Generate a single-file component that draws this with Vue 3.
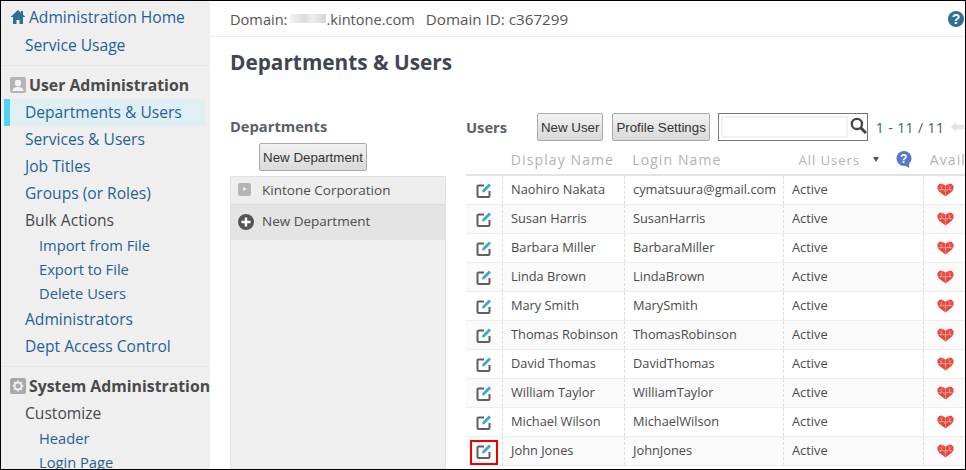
<script setup>
const menuTop = [
  { label: 'Departments & Users', active: true },
  { label: 'Services & Users' },
  { label: 'Job Titles' },
  { label: 'Groups (or Roles)' },
  { label: 'Bulk Actions', plain: true },
];
const bulk = ['Import from File', 'Export to File', 'Delete Users'];
const users = [
  ['Naohiro Nakata', 'cymatsuura@gmail.com'],
  ['Susan Harris', 'SusanHarris'],
  ['Barbara Miller', 'BarbaraMiller'],
  ['Linda Brown', 'LindaBrown'],
  ['Mary Smith', 'MarySmith'],
  ['Thomas Robinson', 'ThomasRobinson'],
  ['David Thomas', 'DavidThomas'],
  ['William Taylor', 'WilliamTaylor'],
  ['Michael Wilson', 'MichaelWilson'],
  ['John Jones', 'JohnJones'],
];
</script>

<template>
  <div class="page">
    <aside class="side">
      <div class="group">
        <a class="item top">
          <svg class="ico home" viewBox="0 0 16 16"><path d="M8 1 0.5 8H3v7h3.500v-4h3v4H13V8h2.500L13 5.700V2h-2v1.800z" fill="#2f6f8f" /></svg>
          Administration Home
        </a>
        <a class="item usage">Service Usage</a>
      </div>
      <div class="group">
        <div class="head">
          <svg class="ico" viewBox="0 0 16 16"><rect width="16" height="16" rx="2" fill="#b4b4b4" /><circle cx="8" cy="6" r="3.200" fill="#f4f4f4" /><path d="M2.500 14c0-3 2.500-4 5.500-4s5.500 1 5.500 4z" fill="#f4f4f4" /></svg>
          User Administration
        </div>
        <a v-for="m in menuTop" :key="m.label" class="item" :class="{ active: m.active, plain: m.plain }">{{ m.label }}</a>
        <a v-for="b in bulk" :key="b" class="item sub">{{ b }}</a>
        <a class="item">Administrators</a>
        <a class="item">Dept Access Control</a>
      </div>
      <div class="group">
        <div class="head">
          <svg class="ico" viewBox="0 0 16 16"><rect width="16" height="16" rx="2" fill="#a8a8a8" /><circle cx="8" cy="8" r="3.500" fill="none" stroke="#f0f0f0" stroke-width="2" /><path d="M8 2.500v2M8 11.500v2M2.500 8h2M11.500 8h2M4.100 4.100l1.400 1.400M10.500 10.500l1.400 1.400M4.100 11.900l1.400-1.400M10.500 5.500l1.400-1.400" stroke="#f0f0f0" stroke-width="1.600" /></svg>
          System Administration
        </div>
        <a class="item plain">Customize</a>
        <a class="item sub">Header</a>
        <a class="item sub">Login Page</a>
      </div>
    </aside>

    <main class="main">
      <header class="bar">
        <span>Domain:</span><span class="blur"></span><span>.kintone.com</span>
        <span class="domain-id">Domain ID: c367299</span>
        <span class="help">?</span>
      </header>
      <h1>Departments &amp; Users</h1>
      <div class="cols">
        <section class="depts">
          <h2>Departments</h2>
          <button class="btn new-dept">New Department</button>
          <div class="tree">
            <div class="tree-row first">
              <span class="play"></span>
              Kintone Corporation
            </div>
            <div class="tree-row add">
              <svg class="plus" viewBox="0 0 16 16"><circle cx="8" cy="8" r="8" fill="#555" /><path d="M8 3.500v9M3.500 8h9" stroke="#fff" stroke-width="2.400" /></svg>
              New Department
            </div>
          </div>
        </section>

        <section class="users">
          <div class="toolbar">
            <h2>Users</h2>
            <button class="btn">New User</button>
            <button class="btn">Profile Settings</button>
            <div class="search">
              <input type="text" />
              <svg class="lens" viewBox="0 0 16 16"><circle cx="6.500" cy="6.500" r="4.800" fill="none" stroke="#444" stroke-width="2.200" /><path d="M10 10l5 5" stroke="#444" stroke-width="2.800" /></svg>
            </div>
            <span class="count">1 - 11 / 11</span>
            <svg class="arrow" viewBox="0 0 14 12"><path d="M0 6 6 0v3.500h8v5H6V12z" fill="#e4e4e4" /></svg>
          </div>
          <div class="table">
            <div class="row th">
              <div class="c-edit"></div>
              <div class="c-name">Display Name</div>
              <div class="c-login">Login Name</div>
              <div class="c-status">
                All Users<span class="caret"></span>
                <svg class="bubble" viewBox="0 0 16 17"><circle cx="8" cy="7.500" r="7.500" fill="#5577cc" /><path d="M8 14l5 3v-6z" fill="#5577cc" /><text x="8" y="12" text-anchor="middle" font-size="12" font-weight="700" font-family="Liberation Sans" fill="#fff">?</text></svg>
              </div>
              <div class="c-app">Avail</div>
            </div>
            <div v-for="(u, i) in users" :key="u[1]" class="row">
              <div class="c-edit">
                <span class="edit-wrap" :class="{ marked: i === 9 }">
                  <svg viewBox="0 0 16 16" class="edit">
                    <path d="M8 3.500H2.500a1 1 0 0 0-1 1v9.500a1 1 0 0 0 1 1h10a1 1 0 0 0 1-1V9" fill="none" stroke="#5f5f5f" stroke-width="2" />
                    <path d="M6 10.500 6.500 8 13 1.500 15 3.500 8.500 10z" fill="#3aa9cf" />
                  </svg>
                </span>
              </div>
              <div class="c-name">{{ u[0] }}</div>
              <div class="c-login">{{ u[1] }}</div>
              <div class="c-status">Active</div>
              <div class="c-app">
                <svg viewBox="0 0 16 14" class="heart">
                  <path d="M8 13.500 1.500 8.500 0 6V3L2 .8H5L8 2.800 11 .8H14L16 3V6L14.500 8.500z" fill="#e8453c" />
                  <path d="M2 3l6 6 6-6M8 3v10M1 6.500h14M5 1 3 8M11 1 13 8" stroke="#f8c4bc" stroke-width=".5" fill="none" />
                </svg>
              </div>
            </div>
          </div>
        </section>
      </div>
    </main>
  </div>
</template>

<style>
html, body {
  margin: 0;
  height: 100%;
  overflow: hidden;
  background: #fff;
}
</style>

<style scoped>
.page {
  box-sizing: border-box;
  width: 966px;
  height: 470px;
  display: flex;
  border: 1px solid #000;
  overflow: hidden;
  font-family: "Open Sans", "Liberation Sans", sans-serif;
  font-size: 14px;
  color: #444;
}

.side {
  width: 209px;
  flex: none;
  background: #efefef;
  padding-top: 3px;
}

.group {
  border-bottom: 1px solid #e6e6e6;
  padding-bottom: 6px;
  margin-bottom: 6px;
}

.group:first-child {
  padding-bottom: 7px;
}

.item {
  display: block;
  height: 27px;
  line-height: 26px;
  padding-left: 24px;
  font-size: 15.600px;
  color: #1f6296;
  white-space: nowrap;
}

.item.top {
  padding-left: 9px;
  padding-bottom: 2px;
  box-sizing: border-box;
  display: flex;
  align-items: center;
  gap: 3px;
}

.item.usage {
  line-height: 28px;
}

.item.plain {
  color: #44484f;
}

.item.active {
  margin-left: 3px;
  margin-right: 5px;
  padding-left: 15px;
  border-left: 6px solid #4fd3f3;
  background: #dff0f5;
}

.item.sub {
  height: 24px;
  line-height: 22px;
  padding-left: 38px;
  font-size: 14.700px;
}

.head {
  height: 27px;
  box-sizing: border-box;
  padding-bottom: 2px;
  display: flex;
  align-items: center;
  gap: 3px;
  padding-left: 9px;
  font-size: 15.800px;
  font-weight: 700;
  color: #4a4a4a;
  white-space: nowrap;
}

.ico {
  width: 16px;
  height: 16px;
  flex: none;
}

.main {
  flex: 1;
  min-width: 0;
}

.bar {
  height: 36px;
  box-sizing: border-box;
  border-bottom: 1px solid #eee;
  padding-left: 20px;
  display: flex;
  align-items: center;
  font-size: 14.600px;
  color: #555;
  white-space: nowrap;
  position: relative;
}

.blur {
  width: 36px;
  height: 9px;
  margin-left: 3px;
  background: linear-gradient(90deg, #f4f4f4, #dcdcdc 40%, #eee 60%, #d6d6d6);
}

.domain-id {
  margin-left: 11px;
  font-size: 15.200px;
}

.help {
  position: absolute;
  right: 1px;
  top: 10px;
  width: 16px;
  height: 16px;
  border-radius: 50%;
  background: #2f6f8f;
  color: #fff;
  font: 700 14px/16px "Liberation Sans", sans-serif;
  text-align: center;
}

h1 {
  margin: 0;
  padding: 11px 0 0 20px;
  font-size: 20.800px;
  line-height: 28px;
  font-weight: 700;
  color: #3f4650;
}

.cols {
  display: flex;
  margin-top: 37px;
  padding-left: 20px;
}

h2 {
  margin: 0;
  font-size: 14.700px;
  font-weight: 700;
  color: #5c6167;
}

.depts {
  width: 216px;
  flex: none;
}

.depts h2 {
  line-height: 24px;
  margin: 1px 0 5px;
}

.btn {
  height: 28px;
  flex: none;
  box-sizing: border-box;
  padding: 0 3px;
  border: 1px solid #aaa;
  border-radius: 2px;
  background: linear-gradient(#f2f2f2, #d9d9d9);
  font-family: "Liberation Sans", sans-serif;
  font-size: 13.300px;
  color: #333;
  white-space: nowrap;
}

.new-dept {
  display: block;
  margin: 0 0 5px 29px;
  width: 108px;
}

.tree {
  border: 1px solid #e2e2e2;
  background: #efefef;
  min-height: 300px;
}

.tree-row {
  display: flex;
  align-items: center;
  gap: 11px;
  padding-left: 7px;
  font-size: 13.500px;
  color: #4d4d4d;
}

.tree-row.first {
  height: 28px;
  box-sizing: border-box;
  padding-bottom: 2px;
  background: #eee;
  border-bottom: 1px solid #dcdcdc;
}

.tree-row.add {
  height: 35px;
  background: #e4e4e4;
  gap: 8px;
  align-items: flex-start;
  padding-top: 7px;
  box-sizing: border-box;
}

.play {
  width: 13px;
  height: 13px;
  border-radius: 2px;
  background: #b5b5b5;
  position: relative;
}

.play::after {
  content: "";
  position: absolute;
  left: 5px;
  top: 4px;
  border-left: 4px solid #eee;
  border-top: 2.500px solid transparent;
  border-bottom: 2.500px solid transparent;
}

.plus {
  width: 16px;
  height: 16px;
  margin-top: 2px;
}

.users {
  margin-left: 20px;
  flex: none;
  width: 500px;
}

.toolbar {
  height: 28px;
  display: flex;
  align-items: center;
  white-space: nowrap;
}

.toolbar h2 {
  width: 71px;
  flex: none;
}

.toolbar .btn + .btn {
  margin-left: 9px;
}

.search {
  margin-left: 8px;
  width: 150px;
  height: 28px;
  flex: none;
  box-sizing: border-box;
  border: 1px solid #777;
  display: flex;
  align-items: center;
}

.search input {
  width: 127px;
  height: 22px;
  box-sizing: border-box;
  margin: 0 0 0 2px;
  padding: 0;
  border: 2px solid #f2f2f2;
  outline: none;
}

.lens {
  width: 17px;
  height: 17px;
  margin-left: 2px;
  margin-bottom: 3px;
}

.count {
  margin-left: 8px;
  font-size: 14px;
  letter-spacing: .4px;
  color: #44606f;
}

.arrow {
  width: 13px;
  height: 12px;
  margin-left: 7px;
  flex: none;
}

.table {
  margin-top: 6px;
}

.row {
  display: flex;
  height: 29px;
  box-sizing: border-box;
  border-bottom: 1px solid #eee;
  width: 500px;
  font-size: 12.800px;
  color: #4a4a4a;
  align-items: stretch;
  white-space: nowrap;
}

.row:nth-child(odd) {
  background: #fafafa;
}

.row.th {
  border-bottom: 2px solid #e3e3e3;
  background: #fff;
  color: #b2b2b2;
  font-size: 14px;
  letter-spacing: 1.100px;
}

.row > div {
  display: flex;
  align-items: center;
  padding-left: 8px;
  padding-bottom: 2px;
  box-sizing: border-box;
  border-right: 1px dashed #ddd;
}

.row.th > div {
  border-right: 0;
}

.row > .c-edit {
  width: 37px;
  padding-left: 0;
  padding-bottom: 0;
  justify-content: center;
}

.row > .c-name {
  width: 122px;
}

.row > .c-login {
  width: 159px;
}

.row > .c-status {
  width: 140px;
}

.row > .c-app {
  flex: 1;
  padding-left: 13px;
  padding-bottom: 0;
  border-right: 0;
}

.row.th > .c-status {
  padding-left: 16px;
  font-size: 13.200px;
  letter-spacing: .9px;
}

.row.th > .c-app {
  padding-left: 8px;
  padding-bottom: 2px;
}

.caret {
  margin-left: 13px;
  border-top: 5px solid #555;
  border-left: 3.500px solid transparent;
  border-right: 3.500px solid transparent;
}

.bubble {
  width: 16px;
  height: 17px;
  margin-left: 17px;
}

.edit-wrap {
  box-sizing: border-box;
  width: 28px;
  height: 25px;
  margin-top: 2px;
  display: flex;
  align-items: center;
  justify-content: center;
}

.edit-wrap.marked {
  border: 2px solid #e00;
}

.edit {
  width: 16px;
  height: 16px;
  margin-top: -2px;
}

.heart {
  width: 17px;
  height: 14px;
}
</style>
